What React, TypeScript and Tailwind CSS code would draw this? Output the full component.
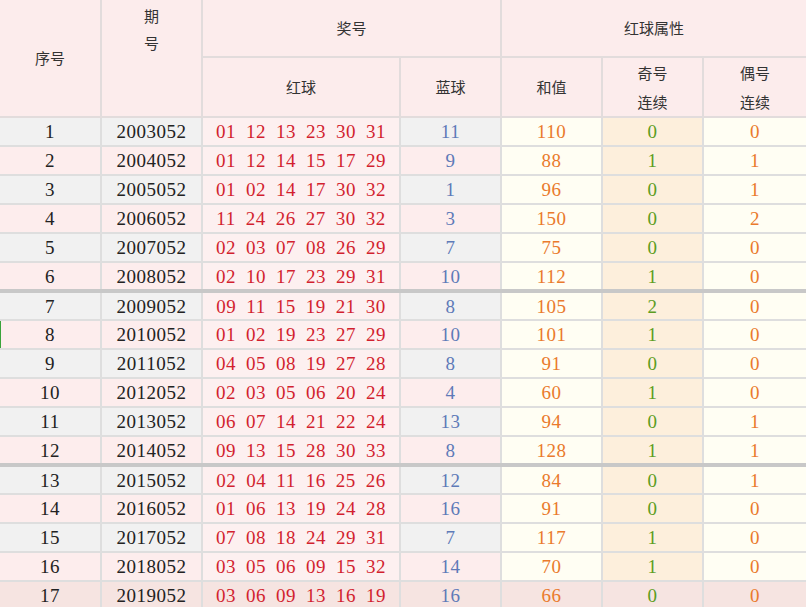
import React from 'react';

type Row = {
  id: number;
  issue: string;
  reds: string[];
  blue: string;
  sum: number;
  odd: number;
  even: number;
};

const raw: [string, string, string, number, number, number][] = [
  ['2003052', '01 12 13 23 30 31', '11', 110, 0, 0],
  ['2004052', '01 12 14 15 17 29', '9', 88, 1, 1],
  ['2005052', '01 02 14 17 30 32', '1', 96, 0, 1],
  ['2006052', '11 24 26 27 30 32', '3', 150, 0, 2],
  ['2007052', '02 03 07 08 26 29', '7', 75, 0, 0],
  ['2008052', '02 10 17 23 29 31', '10', 112, 1, 0],
  ['2009052', '09 11 15 19 21 30', '8', 105, 2, 0],
  ['2010052', '01 02 19 23 27 29', '10', 101, 1, 0],
  ['2011052', '04 05 08 19 27 28', '8', 91, 0, 0],
  ['2012052', '02 03 05 06 20 24', '4', 60, 1, 0],
  ['2013052', '06 07 14 21 22 24', '13', 94, 0, 1],
  ['2014052', '09 13 15 28 30 33', '8', 128, 1, 1],
  ['2015052', '02 04 11 16 25 26', '12', 84, 0, 1],
  ['2016052', '01 06 13 19 24 28', '16', 91, 0, 0],
  ['2017052', '07 08 18 24 29 31', '7', 117, 1, 0],
  ['2018052', '03 05 06 09 15 32', '14', 70, 1, 0],
  ['2019052', '03 06 09 13 16 19', '16', 66, 0, 0],
];

const rows: Row[] = raw.map(([issue, reds, blue, sum, odd, even], i) => ({
  id: i + 1,
  issue,
  reds: reds.split(' '),
  blue,
  sum,
  odd,
  even,
}));

const cjk = { fontFamily: '"Noto Sans CJK SC", "Noto Sans", sans-serif' };
const serif = { fontFamily: '"Liberation Serif", "DejaVu Serif", serif' };

const th = 'border-2 border-[#e2dcdc] bg-[#fcecec] text-[15px] font-normal text-[#333] text-center align-middle';
const td = 'border-2 border-[#dedede] text-center align-middle h-[29px] p-0 text-[19px] tracking-[0.5px] leading-none';

export default function App() {
  return (
    <div className="w-[806px] h-[607px] overflow-hidden bg-white">
      <table className="w-[806px] border-collapse table-fixed" style={serif}>
        <colgroup>
          <col className="w-[101px]" />
          <col className="w-[101px]" />
          <col className="w-[198px]" />
          <col className="w-[101px]" />
          <col className="w-[101px]" />
          <col className="w-[101px]" />
          <col className="w-[103px]" />
        </colgroup>
        <thead style={cjk}>
          <tr className="h-[57px]">
            <th rowSpan={2} className={`${th} border-l-0 border-t-0`}>序号</th>
            <th rowSpan={2} className={`${th} border-t-0 align-top pt-[2px] leading-[27px]`}>
              期<br />号
            </th>
            <th colSpan={2} className={`${th} border-t-0`}>奖号</th>
            <th colSpan={3} className={`${th} border-t-0 border-r-0`}>红球属性</th>
          </tr>
          <tr className="h-[58px]">
            <th className={th}>红球</th>
            <th className={th}>蓝球</th>
            <th className={th}>和值</th>
            <th className={`${th} leading-[29px]`}>奇号<br />连续</th>
            <th className={`${th} leading-[29px] border-r-0`}>偶号<br />连续</th>
          </tr>
        </thead>
        <tbody>
          {rows.map((r) => {
            const last = r.id === 17;
            const odd = r.id % 2 === 1;
            const side = last ? 'bg-[#f6e4e1]' : odd ? 'bg-[#f1f1f1]' : 'bg-[#fdeded]';
            const red = last ? 'bg-[#f6e4e1]' : 'bg-[#fdf0f0]';
            const cream = last ? 'bg-[#f6e4e1]' : 'bg-[#fffef3]';
            const peach = last ? 'bg-[#f6e4e1]' : 'bg-[#fdefdc]';
            const sep = r.id === 6 || r.id === 12 ? 'border-b-4 border-b-[#c8c8c8]' : '';
            return (
              <tr key={r.id}>
                <td className={`${td} ${side} ${sep} text-[#222] border-l-0 ${r.id === 8 ? 'shadow-[inset_1px_0_0_#3aa33a]' : ''}`}>{r.id}</td>
                <td className={`${td} ${side} ${sep} text-[#222]`}>{r.issue}</td>
                <td className={`${td} ${red} ${sep} text-[#d21f2f]`}>
                  <div className="flex justify-center gap-[10px]">
                    {r.reds.map((n, k) => (
                      <span key={k}>{n}</span>
                    ))}
                  </div>
                </td>
                <td className={`${td} ${side} ${sep} text-[#5e7ab8]`}>{r.blue}</td>
                <td className={`${td} ${cream} ${sep} text-[#ea7a2c]`}>{r.sum}</td>
                <td className={`${td} ${peach} ${sep} text-[#5c9d22]`}>{r.odd}</td>
                <td className={`${td} ${cream} ${sep} text-[#ea7a2c] border-r-0`}>{r.even}</td>
              </tr>
            );
          })}
        </tbody>
      </table>
    </div>
  );
}
